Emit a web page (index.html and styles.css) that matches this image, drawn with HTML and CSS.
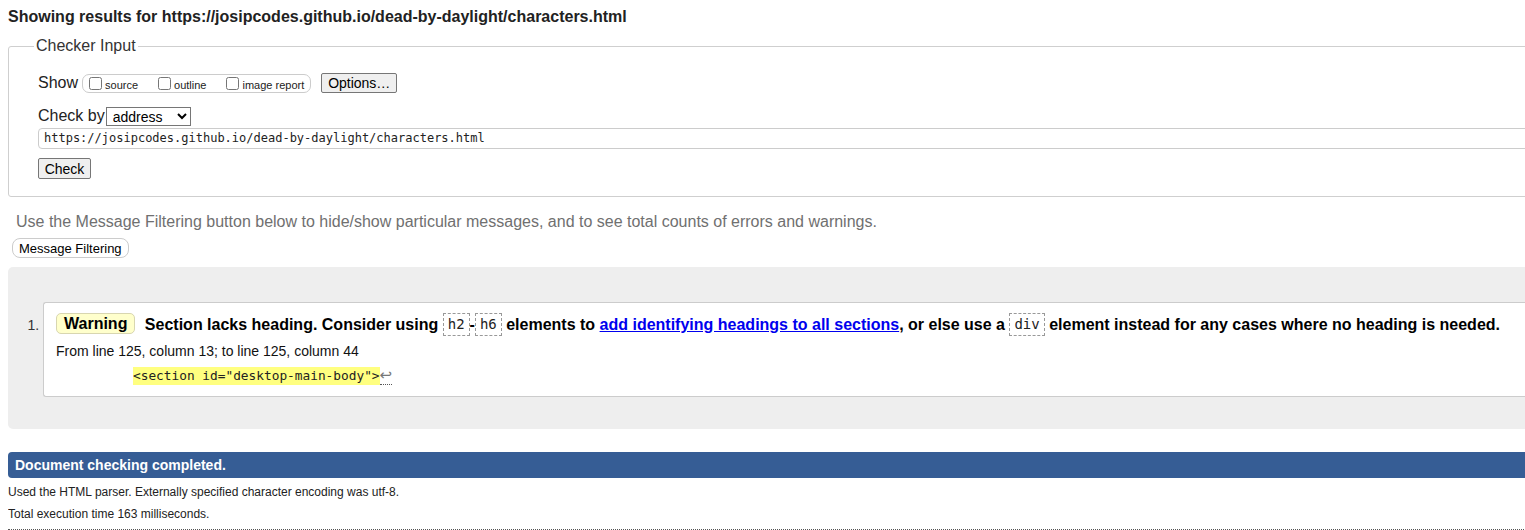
FILE: index.html
```html
<!DOCTYPE html>
<html lang="en">
<head>
<meta charset="utf-8">
<title>Nu Html Checker</title>
<link rel="stylesheet" href="styles.css">
</head>
<body>
<div class="page">
  <h2 class="results-title">Showing results for https://josipcodes.github.io/dead-by-daylight/characters.html</h2>

  <fieldset class="checker-input">
    <legend class="checker-legend">Checker Input</legend>
    <div class="row row-show">
      <span class="row-label">Show</span>
      <span class="show-group">
        <label class="show-opt"><input type="checkbox" class="cb"><span>source</span></label>
        <label class="show-opt"><input type="checkbox" class="cb"><span>outline</span></label>
        <label class="show-opt"><input type="checkbox" class="cb"><span>image report</span></label>
      </span>
      <button class="btn btn-options" type="button">Options…</button>
    </div>
    <div class="row row-checkby">
      <span class="row-label">Check by</span>
      <select class="checkby-select">
        <option>address</option>
      </select>
    </div>
    <div class="url-box">https://josipcodes.github.io/dead-by-daylight/characters.html</div>
    <div class="row row-check">
      <button class="btn btn-check" type="button">Check</button>
    </div>
  </fieldset>

  <p class="filter-intro">Use the Message Filtering button below to hide/show particular messages, and to see total counts of errors and warnings.</p>
  <div class="filter-row"><button class="btn-filter" type="button">Message Filtering</button></div>

  <div class="results-panel">
    <ol class="messages">
      <li class="message">
        <p class="msg-line">
          <span class="badge-warning">Warning</span>
          <span class="msg-text">Section lacks heading. Consider using <code class="tag">h2</code>-<code class="tag">h6</code> elements to <a href="#" class="msg-link">add identifying headings to all sections</a>, or else use a <code class="tag">div</code> element instead for any cases where no heading is needed.</span>
        </p>
        <p class="location">From line 125, column 13; to line 125, column 44</p>
        <p class="extract"><code class="extract-code"><span class="hl">&lt;section id="desktop-main-body"&gt;</span><span class="lf">↩</span></code></p>
      </li>
    </ol>
  </div>

  <p class="status-bar">Document checking completed.</p>
  <div class="details">
    <p class="detail">Used the HTML parser. Externally specified character encoding was utf-8.</p>
    <p class="detail detail-time">Total execution time 163 milliseconds.</p>
  </div>
</div>
</body>
</html>
```

FILE: styles.css
```css
html {
  overflow: hidden;
}

body {
  margin: 8px 0 0 8px;
  font-family: "Liberation Sans", Arial, sans-serif;
  color: #111;
  background: #fff;
}

.page {
  width: 1600px;
}

.results-title {
  margin: 0;
  font-size: 16px;
  line-height: 18px;
  font-weight: bold;
  color: #222;
}

/* Checker input fieldset */
.checker-input {
  margin: 11px 0 0 0;
  padding: 17px 0 17px 25px;
  border: 1px solid #cfcfcf;
  border-radius: 3px;
  min-inline-size: 0;
}

.checker-legend {
  padding: 0 2px;
  font-size: 16px;
  line-height: 18px;
  color: #333;
}

.row {
  display: flex;
  align-items: center;
  padding-left: 4px;
}

.row-label {
  font-size: 16px;
  color: #222;
}

.row-show {
  height: 22px;
}

.show-group {
  display: inline-flex;
  align-items: center;
  gap: 20px;
  height: 17px;
  margin-left: 4px;
  padding: 0 6px 0 6px;
  border: 1px solid #cccccc;
  border-radius: 7px;
}

.show-opt {
  display: inline-flex;
  align-items: center;
  font-size: 11px;
  color: #222;
}

.show-opt span {
  position: relative;
  top: 2px;
}

.cb {
  width: 13px;
  height: 13px;
  margin: 0 3px 0 0;
}

.btn {
  font-family: "Liberation Sans", Arial, sans-serif;
  font-size: 14px;
  color: #000;
  background: #efefef;
  border: 1px solid #767676;
  border-radius: 2px;
  padding: 0 8px;
  height: 21px;
}

.btn-options {
  margin-left: 10px;
  width: 76px;
  height: 20px;
  padding: 0;
}

.row-checkby {
  margin-top: 12px;
  height: 20px;
}

.checkby-select {
  margin-left: 1px;
  width: 85px;
  height: 19px;
  font-family: "Liberation Sans", Arial, sans-serif;
  font-size: 14px;
  color: #000;
  background: #fff;
  border: 1px solid #767676;
  border-radius: 0;
  padding: 0 0 0 2px;
}

.url-box {
  margin: 2px 0 0 4px;
  height: 19px;
  line-height: 19px;
  padding-left: 5px;
  border: 1px solid #cccccc;
  border-radius: 4px;
  font-family: "DejaVu Sans Mono", "Liberation Mono", monospace;
  font-size: 12px;
  color: #222;
}

.row-check {
  margin-top: 9px;
}

.btn-check {
  width: 53px;
  padding: 0;
}

/* Filtering */
.filter-intro {
  margin: 16px 0 0 8px;
  font-size: 16px;
  line-height: 18px;
  color: #707070;
}

.filter-row {
  margin-top: 7px;
  padding-left: 4px;
}

.btn-filter {
  height: 20px;
  padding: 0 6px;
  font-family: "Liberation Sans", Arial, sans-serif;
  font-size: 13px;
  color: #000;
  background: #fff;
  border: 1px solid #cccccc;
  border-radius: 8px;
}

/* Results */
.results-panel {
  margin-top: 9px;
  padding: 35px 0 32px 0;
  background: #eeeeee;
  border-radius: 5px 0 0 5px;
}

.messages {
  margin: 0;
  padding: 0 0 0 35px;
  font-size: 16px;
  color: #333;
}

.message {
  background: #fff;
  border: 1px solid #cccccc;
  border-right: none;
  border-radius: 3px 0 0 3px;
  padding: 10px 0 11px 12px;
}

.message::marker {
  color: #333;
  font-size: 14px;
}

.msg-line {
  margin: 0;
  line-height: 23px;
  font-size: 16px;
  font-weight: bold;
  color: #000;
  white-space: nowrap;
}

.badge-warning {
  display: inline-block;
  height: 19px;
  line-height: 19px;
  padding: 0 7px;
  background: #ffffcc;
  border: 1px solid #d8d6b0;
  border-radius: 5px;
  margin-right: 5px;
  vertical-align: top;
}

.tag {
  display: inline-block;
  height: 21px;
  line-height: 21px;
  padding: 0 4px;
  border: 1px dashed #999;
  font-family: "DejaVu Sans Mono", "Liberation Mono", monospace;
  font-size: 14px;
  font-weight: normal;
  color: #222;
  vertical-align: top;
}

.msg-link {
  color: #0000ee;
  text-decoration: underline;
}

.location {
  margin: 7px 0 0 0;
  font-size: 14px;
  line-height: 16px;
  color: #111;
}

.extract {
  margin: 7px 0 0 77px;
  line-height: 18px;
}

.extract-code {
  font-family: "DejaVu Sans Mono", "Liberation Mono", monospace;
  font-size: 12.8px;
  color: #222;
}

.hl {
  display: inline-block;
  height: 18px;
  background: #ffff80;
}

.lf {
  display: inline-block;
  height: 17px;
  font-family: "DejaVu Sans", sans-serif;
  font-size: 15px;
  line-height: 17px;
  color: #777;
  border-bottom: 1px dotted #555;
}

/* Status */
.status-bar {
  margin: 23px 0 0 0;
  height: 26px;
  line-height: 26px;
  padding-left: 7px;
  background: #365d95;
  color: #fff;
  font-size: 14px;
  font-weight: bold;
  border-radius: 4px 0 0 4px;
}

.details {
  padding-bottom: 8px;
  border-bottom: 1px dotted #555;
}

.detail {
  margin: 7px 0 0 0;
  font-size: 12px;
  line-height: 14px;
  color: #222;
}

.detail-time {
  margin-top: 8px;
}
```
